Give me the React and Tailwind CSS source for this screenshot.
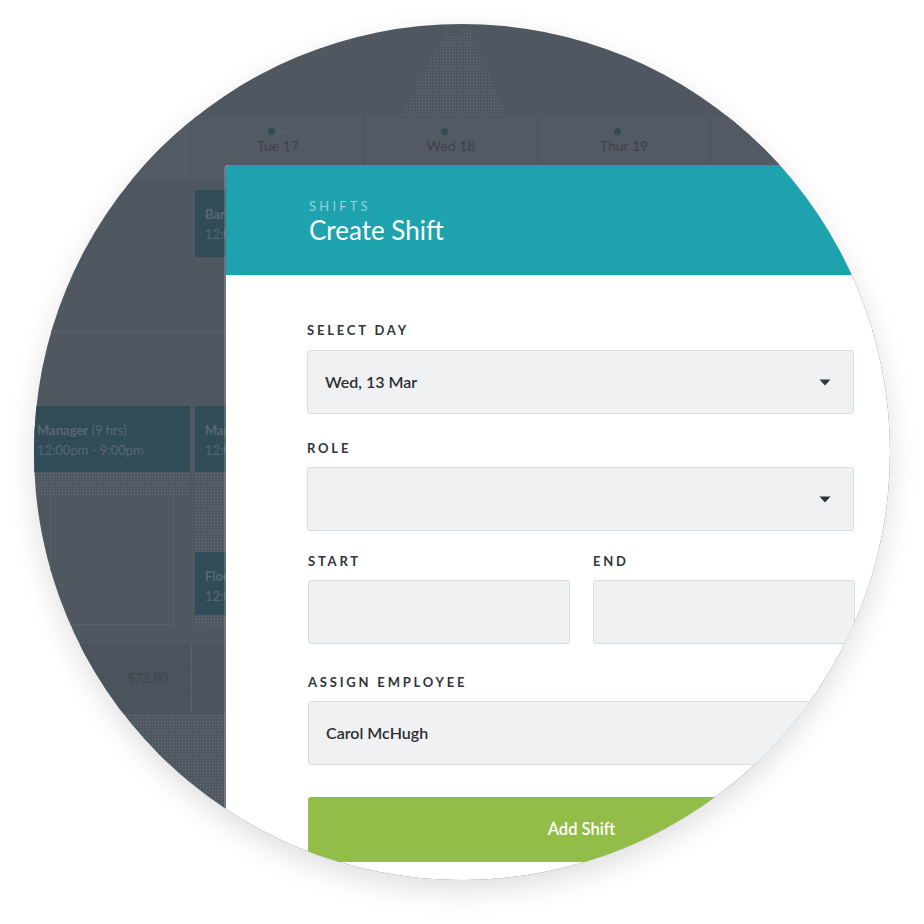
import React from "react";

function Caret() {
  return (
    <svg width="12" height="7" viewBox="0 0 12 7" className="shrink-0">
      <path d="M0.5 0.5h11L6 6.5z" fill="#2e3439" />
    </svg>
  );
}

function Label({ children, className = "" }) {
  return (
    <div className={"text-[13px] leading-[16px] font-bold tracking-[2.8px] text-[#30363b] " + className}>
      {children}
    </div>
  );
}

function Field({ children, caret, className = "" }) {
  return (
    <div
      className={
        "h-[64px] rounded-[3px] border border-[#d9dcde] bg-[#f0f1f2] flex items-center justify-between pl-[17px] pr-[22px] " +
        className
      }
    >
      <span className="text-[16px] font-semibold text-[#2a2f34]">{children}</span>
      {caret && <Caret />}
    </div>
  );
}

function ShiftCard({ title, time, className = "" }) {
  return (
    <div className={"bg-[#2f4c57] px-[10px] pt-[14px] text-[13px] leading-[20px] text-[#5b6870] " + className}>
      <div className="whitespace-nowrap">
        <span className="font-bold">{title}</span>
        {time && <span> (9 hrs)</span>}
      </div>
      <div className="whitespace-nowrap">12:00pm - 9:00pm</div>
    </div>
  );
}

function DayHead({ day }) {
  return (
    <div className="h-full bg-[#525a64] flex flex-col items-center pt-[13px]">
      <div className="flex items-center gap-[3px]">
        <span className="w-[7px] h-[7px] rounded-full bg-[#2f4c57]" />
        <span className="text-[6px] leading-[7px] text-[#5f6770]">3/5</span>
      </div>
      <div className="text-[14px] leading-[18px] text-[#3b4249] mt-[2px]">{day}</div>
    </div>
  );
}

function Schedule() {
  const dotted = "bg-[radial-gradient(rgba(125,133,141,0.55)_0.7px,transparent_1px)] bg-[length:3px_3px]";
  return (
    <div className="w-full">
      {/* top strip with faint dithered tent */}
      <div className="h-[91px] pt-[3px] pl-[367px]">
        <svg width="104" height="88" viewBox="0 0 104 88">
          <defs>
            <pattern id="dots" width="3" height="3" patternUnits="userSpaceOnUse">
              <rect width="1" height="1" fill="#6a727b" />
            </pattern>
          </defs>
          <path d="M0 88 L46 2 L56 14 L68 0 L104 88 Z" fill="url(#dots)" opacity="0.9" />
        </svg>
      </div>

      {/* day header row */}
      <div className="grid grid-cols-[156px_170px_170px_170px_170px] gap-x-[3px] h-[65px]">
        <div className="h-full bg-[#525a64]" />
        <DayHead day="Tue 17" />
        <DayHead day="Wed 18" />
        <DayHead day="Thur 19" />
        <DayHead day="Fri 20" />
      </div>

      {/* row 1 */}
      <div className="grid grid-cols-[156px_170px_170px_170px_170px] gap-x-[3px] h-[150px]">
        <div />
        <div className="pt-[10px] pl-[2px]">
          <ShiftCard title="Bar" className="h-[67px]" />
        </div>
      </div>
      <div className="h-[3px] bg-[#555d67]" />

      {/* row 2 */}
      <div className="grid grid-cols-[156px_170px_170px_170px_170px] gap-x-[3px] h-[311px]">
        <div className="pt-[73px] flex flex-col">
          <ShiftCard title="Manager" time className="h-[66px] ml-[-7px]" />
          <div className={"h-[25px] " + dotted} />
          <div className="flex-1 mx-[16px] mb-[19px] border-x border-b border-[#58606a]" />
        </div>
        <div className="pt-[73px] pl-[2px] flex flex-col">
          <ShiftCard title="Manager" className="h-[66px]" />
          <div className={"h-[80px] " + dotted} />
          <ShiftCard title="Floor" className="h-[63px]" />
          <div className={"h-[13px] " + dotted} />
        </div>
      </div>

      {/* totals row */}
      <div className={"grid grid-cols-[156px_170px_170px_170px_170px] gap-x-[3px] h-[70px] " + dotted}>
        <div className="flex items-center justify-end">
          <div className="w-[112px] h-full bg-[#4b535c] flex items-center justify-end pr-[22px] text-[13px] text-[#3e454c]">
            $73.80
          </div>
        </div>
        <div className="bg-[#4b535c]" />
      </div>
      <div className={"h-[120px] " + dotted} />
    </div>
  );
}

function ShiftModal() {
  return (
    <div className="absolute left-[192px] top-[141px] w-[709px] rounded-tl-[4px] overflow-hidden bg-white shadow-[-2px_0_0_rgba(255,255,255,0.18)]">
      <div className="h-[111px] bg-[#1ea2ae] pl-[83px] pt-[34px] border-b border-[#d4edef]">
        <div className="text-[13px] leading-[15px] tracking-[3.2px] text-[#93d3d9]">SHIFTS</div>
        <div className="text-[26px] leading-[30px] text-white mt-[1px]">Create Shift</div>
      </div>
      <div className="px-[81px] pt-[46px] pb-[60px]">
        <Label>SELECT DAY</Label>
        <Field caret className="mt-[12px]">Wed, 13 Mar</Field>

        <Label className="mt-[26px]">ROLE</Label>
        <Field caret className="mt-[11px]" />

        <div className="grid grid-cols-[263px_262px] gap-x-[23px] mt-[22px]">
          <div>
            <Label className="pl-[1px]">START</Label>
            <Field className="mt-[11px] ml-[1px]" />
          </div>
          <div>
            <Label>END</Label>
            <Field className="mt-[11px]" />
          </div>
        </div>

        <Label className="mt-[30px] pl-[1px]">ASSIGN EMPLOYEE</Label>
        <Field className="mt-[11px] ml-[1px]">Carol McHugh</Field>

        <button className="mt-[32px] ml-[1px] w-[547px] h-[65px] rounded-[3px] bg-[#92bd48] text-white text-[16.5px] font-semibold">
          Add Shift
        </button>
      </div>
    </div>
  );
}

export default function App() {
  return (
    <div className="w-[924px] h-[924px] bg-white pt-[24px] pl-[34px] font-['Lato',sans-serif]">
      <div className="relative w-[856px] h-[856px] rounded-full overflow-hidden bg-[#4f5761] shadow-[0_10px_28px_rgba(0,0,0,0.13)]">
        <Schedule />
        <ShiftModal />
      </div>
    </div>
  );
}
